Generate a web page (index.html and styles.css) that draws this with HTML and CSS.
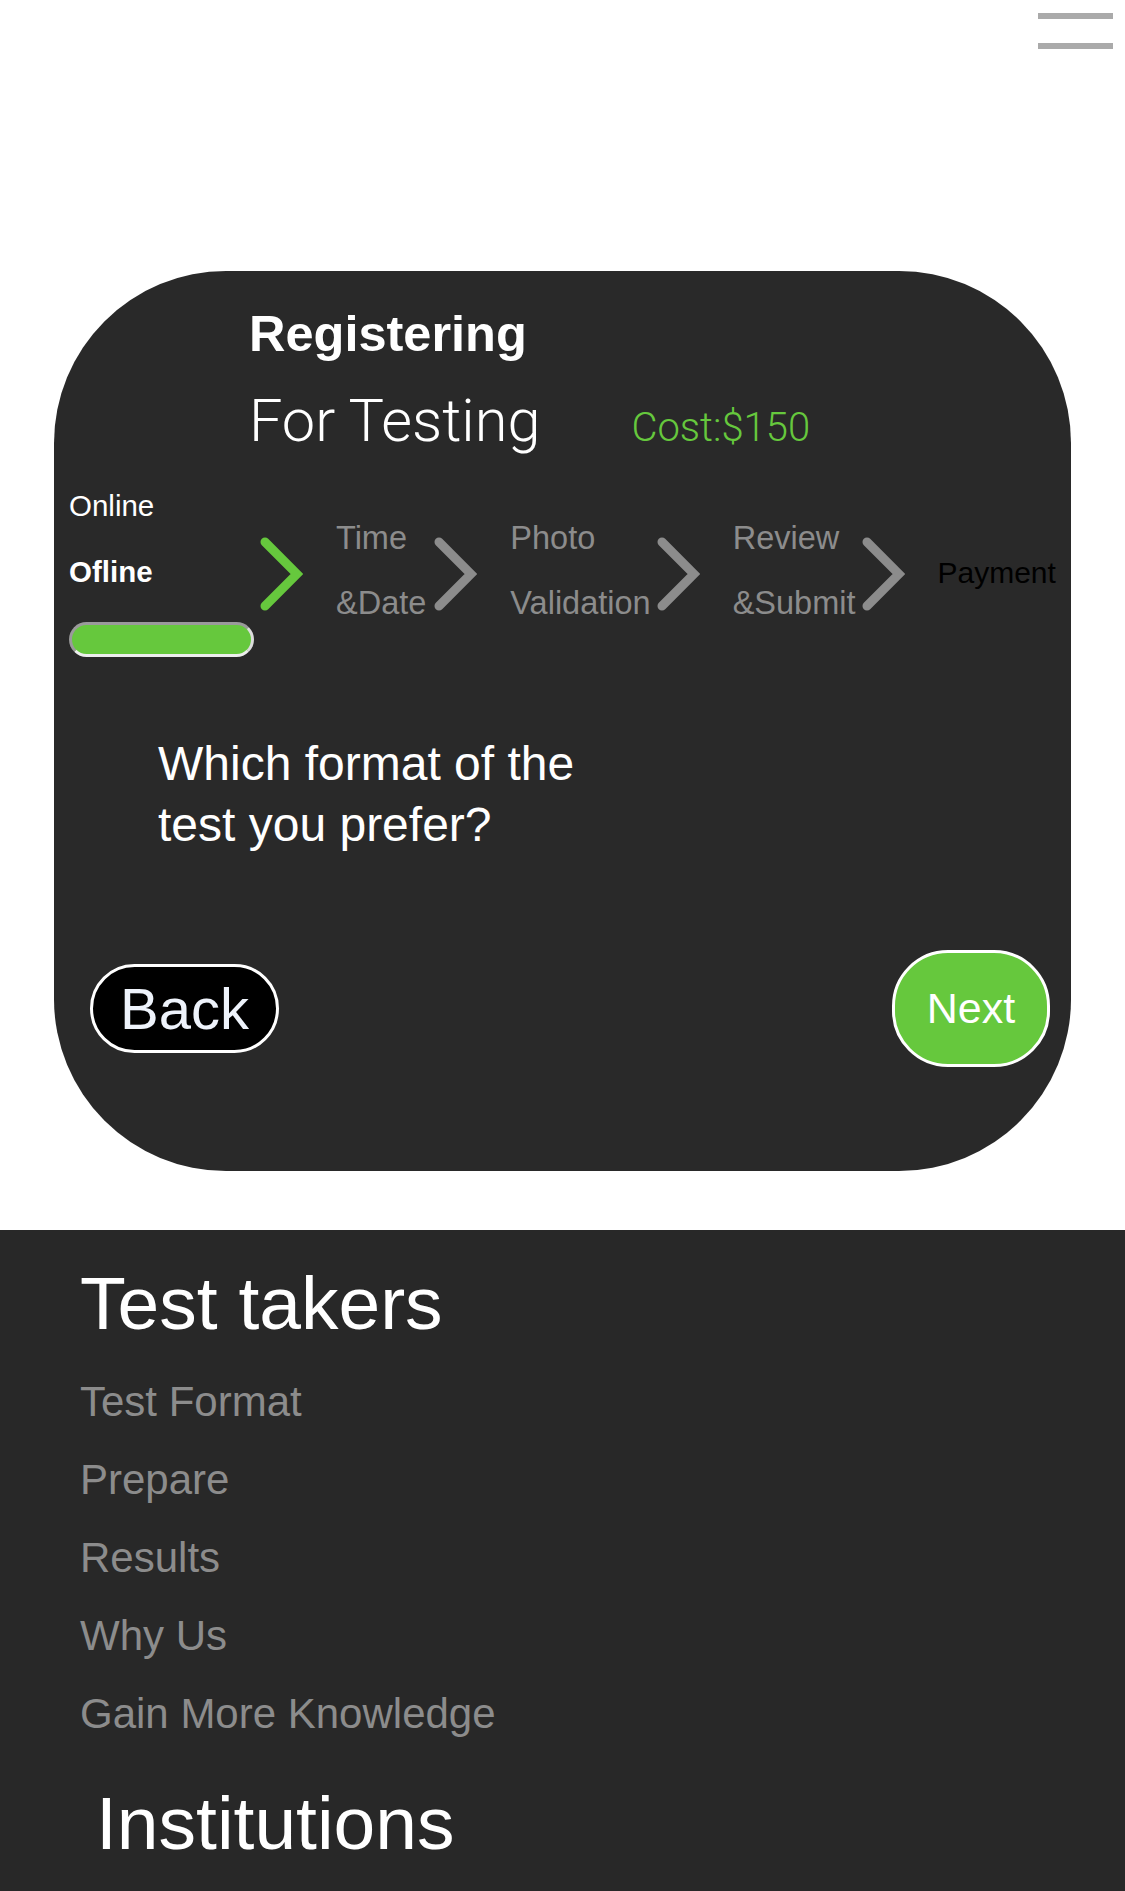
FILE: index.html
```html
<!DOCTYPE html>
<html lang="en">
<head>
<meta charset="utf-8">
<title>Registering For Testing</title>
<link rel="stylesheet" href="styles.css">
</head>
<body>
<header class="topbar">
  <button class="hamburger" aria-label="Menu">
    <span class="bar"></span>
    <span class="bar"></span>
  </button>
</header>

<main class="card">
  <div class="title">
    <div class="title-main">Registering</div>
    <div class="title-sub">
      <span class="title-for">For Testing</span>
      <span class="cost">Cost:$150</span>
    </div>
  </div>

  <div class="steps">
    <div class="mode">
      <div class="mode-opt">Online</div>
      <div class="mode-opt mode-active">Ofline</div>
      <div class="mode-pill"></div>
    </div>
    <svg class="chev chev-green" viewBox="0 0 44 76" width="44" height="76"><polyline points="6,6 38,38 6,70"/></svg>
    <div class="step"><div>Time</div><div>&amp;Date</div></div>
    <svg class="chev chev-narrow" viewBox="0 0 44 76" width="44" height="76"><polyline points="6,6 38,38 6,70"/></svg>
    <div class="step"><div>Photo</div><div>Validation</div></div>
    <svg class="chev" viewBox="0 0 44 76" width="44" height="76"><polyline points="6,6 38,38 6,70"/></svg>
    <div class="step"><div>Review</div><div>&amp;Submit</div></div>
    <svg class="chev" viewBox="0 0 44 76" width="44" height="76"><polyline points="6,6 38,38 6,70"/></svg>
    <div class="step-final">Payment</div>
  </div>

  <p class="question">Which format of the<br>test you prefer?</p>

  <div class="actions">
    <button class="btn btn-back">Back</button>
    <button class="btn btn-next">Next</button>
  </div>
</main>

<footer class="footer">
  <h2 class="footer-title">Test takers</h2>
  <ul class="footer-links">
    <li>Test Format</li>
    <li>Prepare</li>
    <li>Results</li>
    <li>Why Us</li>
    <li>Gain More Knowledge</li>
  </ul>
  <h2 class="footer-title footer-title-2">Institutions</h2>
</footer>
</body>
</html>
```

FILE: styles.css
```css
* { box-sizing: border-box; }

html, body {
  margin: 0;
  padding: 0;
  background: #ffffff;
  font-family: "Liberation Sans", Arial, sans-serif;
}

body {
  width: 1125px;
  overflow: hidden;
}

.topbar {
  height: 271px;
  display: flex;
  justify-content: flex-end;
  align-items: flex-start;
}

.hamburger {
  margin: 13px 12px 0 0;
  padding: 0;
  border: 0;
  background: transparent;
  display: flex;
  flex-direction: column;
  gap: 24px;
}

.hamburger .bar {
  display: block;
  width: 75px;
  height: 6px;
  background: #aaaaaa;
}

.card {
  margin-left: 54px;
  width: 1017px;
  height: 900px;
  background: #292929;
  border-radius: 172px;
  padding: 34px 0 0 15px;
  color: #ffffff;
}

.title {
  margin-left: 180px;
}

.title-main {
  font-weight: 700;
  font-size: 50.5px;
  line-height: 58px;
}

.title-sub {
  margin-top: 22px;
  display: flex;
  align-items: baseline;
  gap: 91px;
}

.title-for {
  font-family: "Roboto", "Liberation Sans", sans-serif;
  font-weight: 300;
  font-size: 59.5px;
  line-height: 72px;
}

.cost {
  font-family: "Roboto", "Liberation Sans", sans-serif;
  font-weight: 300;
  font-size: 40px;
  color: #66c83d;
}

.steps {
  margin-top: 16px;
  display: flex;
  align-items: flex-start;
}

.mode {
  width: 185px;
  font-size: 29.5px;
  line-height: 66px;
}

.mode-active {
  font-weight: 700;
}

.mode-pill {
  margin-top: 17px;
  width: 185px;
  height: 35px;
  border-radius: 18px;
  background: #66c83d;
  border: 3px solid;
  border-color: #9a9a9a #dcdcdc #eeeeee #9a9a9a;
}

.chev {
  flex: none;
  margin: 63px 33px 0 5px;
}

.chev polyline {
  fill: none;
  stroke: #8c8c8c;
  stroke-width: 9;
  stroke-linecap: round;
  stroke-linejoin: miter;
}

.chev-green polyline { stroke: #66c83d; }

.chev-narrow { margin-left: 7px; }

.step {
  margin-top: 33px;
  color: #8c8c8c;
  font-size: 32.5px;
  line-height: 65px;
  white-space: nowrap;
}

.step-final {
  margin-top: 67px;
  color: #000000;
  font-size: 30px;
  line-height: 66px;
}

.question {
  margin: 76px 0 0 89px;
  font-size: 48px;
  line-height: 61px;
}

.actions {
  margin-top: 95px;
  padding: 0 21px 0 21px;
  display: flex;
  justify-content: space-between;
  align-items: center;
}

.btn {
  font-family: "Liberation Sans", Arial, sans-serif;
  border: 3px solid #ffffff;
  cursor: pointer;
  padding: 0;
}

.btn-back {
  width: 189px;
  height: 89px;
  border-radius: 45px;
  background: #000000;
  color: #eef3fb;
  font-size: 58px;
}

.btn-next {
  width: 158px;
  height: 117px;
  border-radius: 56px;
  background: #66c83d;
  color: #ffffff;
  font-size: 43px;
}

.footer {
  margin-top: 59px;
  background: #282828;
  height: 661px;
  padding: 30px 0 0 80px;
}

.footer-title {
  margin: 0;
  font-weight: 400;
  font-size: 75px;
  line-height: 86px;
  color: #ffffff;
}

.footer-title-2 {
  margin: 26px 0 0 16px;
  font-size: 75px;
  line-height: 88px;
}

.footer-links {
  list-style: none;
  margin: 17px 0 0 0;
  padding: 0;
  color: #8c8c8c;
  font-size: 42px;
  line-height: 78px;
}
```
